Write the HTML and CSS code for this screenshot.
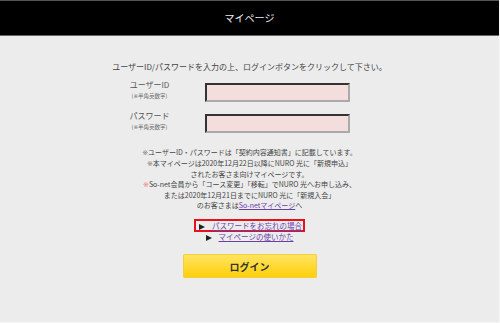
FILE: index.html
```html
<!DOCTYPE html>
<html lang="ja">
<head>
  <meta charset="UTF-8">
  <title>マイページ</title>
  <link rel="stylesheet" href="styles.css">
</head>
<body>
  <div class="page">
    <header class="header">
      <h1>マイページ</h1>
    </header>

    <main class="content">
      <p class="lead">ユーザーID/パスワードを入力の上、ログインボタンをクリックして下さい。</p>

      <form class="login-form">
        <div class="field">
          <label class="field-label" for="userId">ユーザーID<small>(<span class="mark">※</span>半角英数字)</small></label>
          <input class="field-input" id="userId" type="text">
        </div>
        <div class="field">
          <label class="field-label" for="password">パスワード<small>(<span class="mark">※</span>半角英数字)</small></label>
          <input class="field-input" id="password" type="password">
        </div>
      </form>

      <div class="notes">
        <p><span class="mark">※</span>ユーザーID・パスワードは「契約内容通知書」に記載しています。</p>
        <p><span class="mark">※</span>本マイページは2020年12月22日以降にNURO 光に「新規申込」</p>
        <p>されたお客さま向けマイページです。</p>
        <p><span class="mark mark-red">※</span>So-net会員から「コース変更」「移転」でNURO 光へお申し込み、</p>
        <p>または2020年12月21日までにNURO 光に「新規入会」</p>
        <p>のお客さまは<a href="#">So-netマイページ</a>へ</p>
      </div>

      <ul class="links">
        <li><span class="highlight"><span class="arrow"></span><a href="#">パスワードをお忘れの場合</a></span></li>
        <li><span class="arrow"></span><a href="#">マイページの使いかた</a></li>
      </ul>

      <button class="login-btn" type="button">ログイン</button>
    </main>
  </div>
</body>
</html>
```

FILE: styles.css
```css
* {
  box-sizing: border-box;
}

body {
  margin: 0;
  font-family: "Noto Sans CJK JP", sans-serif;
  background: #ececec;
  color: #333;
}

.page {
  width: 500px;
  height: 323px;
  background: #ececec;
  border-right: 1px solid #f7f7f7;
  border-bottom: 1px solid #f7f7f7;
}

.header {
  height: 36px;
  background: #000;
  border-top: 1px solid #555;
  border-bottom: 1px solid #666;
  display: flex;
  align-items: center;
  justify-content: center;
}

.header h1 {
  margin: 0;
  font-size: 10px;
  font-weight: normal;
  color: #eee;
  line-height: 12px;
}

.content {
  padding-top: 26px;
  text-align: center;
}

.lead {
  margin: 0;
  font-size: 8px;
  line-height: 10px;
  color: #444;
}

.login-form {
  width: 280px;
  margin: 8px auto 0;
}

.field {
  display: flex;
  align-items: flex-start;
  margin-bottom: 9px;
}

.field-label {
  width: 80px;
  font-size: 8px;
  line-height: 10px;
  color: #555;
  text-align: center;
}

.field-label small {
  display: block;
  font-size: 5.5px;
  line-height: 12px;
  color: #666;
}

.field-input {
  width: 145px;
  height: 19px;
  margin: 3px 0 0 15px;
  padding: 0 3px;
  background: #f3dddd;
  border: 2px solid;
  border-color: #333 #aaa #aaa #333;
  font-size: 8px;
}

.notes {
  margin-top: 14px;
}

.notes p {
  margin: 0;
  font-size: 7px;
  line-height: 10px;
  color: #444;
}

/* reference mark, kept out of the emoji fallback */
.mark {
  font-family: "DejaVu Sans", sans-serif;
  color: #777;
}

.mark-red {
  color: #e77;
}

a {
  color: #6b3fa8;
  text-decoration: underline;
}

.links {
  list-style: none;
  margin: 9px 0 0;
  padding: 0;
}

.links li {
  font-size: 7.5px;
  line-height: 10px;
}

.highlight {
  display: inline-block;
  padding: 0 1px 0 3px;
  border: 2px solid #e8101a;
  line-height: 9px;
}

/* small black triangle before each link */
.arrow {
  display: inline-block;
  width: 0;
  height: 0;
  border-top: 3px solid transparent;
  border-bottom: 3px solid transparent;
  border-left: 6px solid #222;
  margin-right: 7px;
  vertical-align: middle;
}

.login-btn {
  display: block;
  width: 134px;
  height: 24px;
  margin: 12px auto 0;
  background: linear-gradient(#ffe462, #ffcf0a);
  border: 1px solid #f0d040;
  border-radius: 1px;
  font-family: "Noto Sans CJK JP", sans-serif;
  font-size: 10px;
  font-weight: bold;
  color: #333;
}
```
